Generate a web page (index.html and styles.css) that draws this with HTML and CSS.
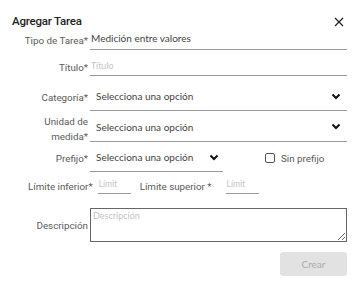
FILE: index.html
```html
<!DOCTYPE html>
<html lang="es">
<head>
<meta charset="utf-8">
<link rel="stylesheet" href="styles.css">
</head>
<body>
<div class="dialog">
  <div class="header">
    <span class="title">Agregar Tarea</span>
    <span class="close"><svg width="10" height="10" viewBox="0 0 10 10"><path d="M1 1L9 9M9 1L1 9" stroke="#222" stroke-width="1.2"/></svg></span>
  </div>
  <div class="row r1">
    <label class="lbl">Tipo de Tarea*</label>
    <div class="field text">Medición entre valores</div>
  </div>
  <div class="row r2">
    <label class="lbl">Título*</label>
    <div class="field text ph">Título</div>
  </div>
  <div class="row r3">
    <label class="lbl">Categoría*</label>
    <div class="field select"><span>Selecciona una opción</span><svg class="chev" width="10" height="7" viewBox="0 0 10 7"><path d="M1.5 1.5L5 5L8.5 1.5" fill="none" stroke="#111" stroke-width="2"/></svg></div>
  </div>
  <div class="row r4">
    <label class="lbl">Unidad de<br>medida*</label>
    <div class="field select"><span>Selecciona una opción</span><svg class="chev" width="10" height="7" viewBox="0 0 10 7"><path d="M1.5 1.5L5 5L8.5 1.5" fill="none" stroke="#111" stroke-width="2"/></svg></div>
  </div>
  <div class="row r5">
    <label class="lbl">Prefijo*</label>
    <div class="field select short"><span>Selecciona una opción</span><svg class="chev" width="10" height="7" viewBox="0 0 10 7"><path d="M1.5 1.5L5 5L8.5 1.5" fill="none" stroke="#111" stroke-width="2"/></svg></div>
    <div class="check"><span class="box"></span><span>Sin prefijo</span></div>
  </div>
  <div class="row r6">
    <label class="lbl2">Límite inferior*</label>
    <div class="field lim ph">Límit</div>
    <label class="lbl2 sup">Límite superior *</label>
    <div class="field lim ph">Límit</div>
  </div>
  <div class="row r7">
    <label class="lbl">Descripción</label>
    <textarea class="area" placeholder="Descripción"></textarea>
  </div>
  <div class="actions">
    <button class="btn">Crear</button>
  </div>
</div>
</body>
</html>
```
FILE: styles.css
```css
* { box-sizing: border-box; }
body {
  margin: 0;
  background: #fff;
  font-family: Roboto, "Liberation Sans", sans-serif;
  color: #555;
}
.dialog {
  width: 360px;
  height: 289px;
  padding: 12px 13px 0 10px;
}
.header {
  display: flex;
  justify-content: space-between;
  align-items: center;
  height: 18px;
  padding-left: 2px;
}
.title {
  font-size: 11.5px;
  font-weight: 500;
  color: #222;
  letter-spacing: -0.2px;
}
.close { display: flex; margin-right: 3px; margin-top: 2px; }
.row {
  display: flex;
  align-items: center;
}
.lbl {
  width: 78px;
  flex: none;
  text-align: right;
  font-size: 9.8px;
  line-height: 15px;
  margin-right: 2px;
  color: #5a5a5a;
}
.field {
  font-family: Lato, "Open Sans", sans-serif;
  font-size: 10px;
  color: #444;
  border-bottom: 1px solid #9a9a9a;
}
.text {
  flex: 1;
  height: 18px;
  line-height: 12px;
  padding-left: 1px;
}
.ph { color: #c4c4c4; font-size: 9px; }
.r1 { margin-top: 2px; }
.r1 .lbl { align-self: flex-start; margin-top: 1px; }
.r2 { margin-top: 8px; }
.r2 .lbl { align-self: flex-start; margin-top: 2px; }
.r2 .text { height: 18px; padding-top: 2px; }
.select {
  flex: 1;
  display: flex;
  justify-content: space-between;
  align-items: center;
  height: 25px;
  padding: 0 6px 4px 6px;
}
.chev { flex: none; }
.r3 { margin-top: 10px; }
.r3 .lbl { margin-top: -3px; }
.r4 { margin-top: 3px; }
.r4 .select { height: 25px; }
.r5 { margin-top: 3px; }
.r5 .lbl { margin-top: -3px; }
.select.short { flex: none; width: 133px; padding-right: 4px; }
.check {
  display: flex;
  align-items: center;
  margin-left: 42px;
  margin-top: -3px;
  font-size: 9.8px;
  color: #5a5a5a;
}
.box {
  width: 10px;
  height: 10px;
  border: 1px solid #555;
  border-radius: 2px;
  margin-right: 6px;
}
.r6 { margin-top: 7px; padding-left: 18px; }
.lbl2 { font-size: 9.8px; color: #5a5a5a; }
.lim {
  width: 33px;
  height: 15px;
  margin-left: 5px;
  padding-left: 1px;
  line-height: 11px;
  font-size: 8.5px;
}
.sup { margin-left: 9px; margin-right: 9px; }
.r7 { margin-top: 14px; }
.area {
  width: 259px;
  height: 34px;
  border: 1px solid #666;
  border-radius: 0;
  margin: 0;
  padding: 1px 2px;
  font-family: Lato, "Open Sans", sans-serif;
  font-size: 9px;
  resize: both;
  outline: none;
}
.area::placeholder { color: #c4c4c4; }
.actions {
  display: flex;
  justify-content: flex-end;
  margin-top: 10px;
}
.btn {
  width: 67px;
  height: 24px;
  border: none;
  border-radius: 3px;
  background: #e2e2e2;
  color: #acacac;
  font-family: Lato, "Open Sans", sans-serif;
  font-size: 10px;
}
```
